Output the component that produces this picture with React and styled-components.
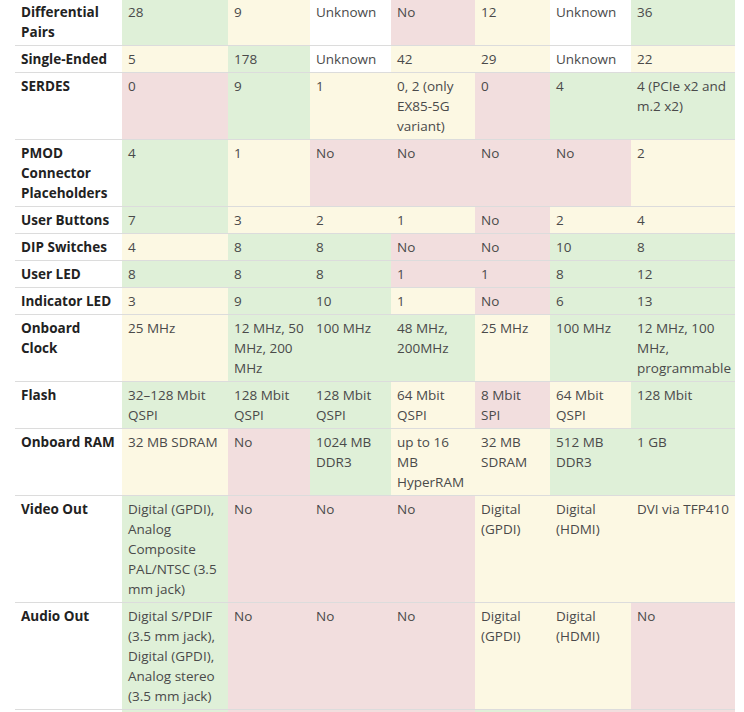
import React from 'react';
import styled, { createGlobalStyle } from 'styled-components';

const GlobalStyle = createGlobalStyle`
  html, body {
    margin: 0;
    padding: 0;
    background: #fff;
  }
  body {
    font-family: "Open Sans", "Noto Sans", "Liberation Sans", sans-serif;
    overflow: hidden;
  }
`

const shades = {
  g: '#dff0d8',
  y: '#fcf8e3',
  r: '#f2dede',
  w: '#ffffff',
}

const Wrapper = styled.div`
  padding-left: 15px;
  margin-top: -2px;
`

const Table = styled.table`
  border-collapse: collapse;
  table-layout: fixed;
  width: 720px;
  font-size: 13.5px;
  line-height: 20px;
`

const Col = styled.col`
  width: ${p => p.$w}px;
`

const Row = styled.tr`
  border-top: 1px solid #dcdcdc;
`

const Head = styled.th`
  text-align: left;
  vertical-align: top;
  padding: 3px 6px;
  font-weight: 700;
  color: #222;
  background: #fff;
`

const Cell = styled.td`
  vertical-align: top;
  padding: 3px 6px;
  color: #4a4a4a;
  white-space: pre-line;
  background: ${p => shades[p.$c]};
`

const widths = [107, 106, 82, 81, 84, 75, 81, 104]

const rows = [
  ['Differential Pairs', [['28', 'g'], ['9', 'y'], ['Unknown', 'w'], ['No', 'r'], ['12', 'y'], ['Unknown', 'w'], ['36', 'g']]],
  ['Single-Ended', [['5', 'y'], ['178', 'g'], ['Unknown', 'w'], ['42', 'y'], ['29', 'y'], ['Unknown', 'w'], ['22', 'y']]],
  ['SERDES', [['0', 'r'], ['9', 'g'], ['1', 'y'], ['0, 2 (only EX85-5G variant)', 'y'], ['0', 'r'], ['4', 'g'], ['4 (PCIe x2 and m.2 x2)', 'g']]],
  ['PMOD Connector Placeholders', [['4', 'g'], ['1', 'y'], ['No', 'r'], ['No', 'r'], ['No', 'r'], ['No', 'r'], ['2', 'y']]],
  ['User Buttons', [['7', 'g'], ['3', 'y'], ['2', 'y'], ['1', 'y'], ['No', 'r'], ['2', 'y'], ['4', 'y']]],
  ['DIP Switches', [['4', 'y'], ['8', 'g'], ['8', 'g'], ['No', 'r'], ['No', 'r'], ['10', 'g'], ['8', 'g']]],
  ['User LED', [['8', 'g'], ['8', 'g'], ['8', 'g'], ['1', 'r'], ['1', 'r'], ['8', 'g'], ['12', 'g']]],
  ['Indicator LED', [['3', 'y'], ['9', 'g'], ['10', 'g'], ['1', 'y'], ['No', 'r'], ['6', 'g'], ['13', 'g']]],
  ['Onboard Clock', [['25 MHz', 'y'], ['12 MHz, 50 MHz, 200 MHz', 'g'], ['100 MHz', 'g'], ['48 MHz, 200MHz', 'g'], ['25 MHz', 'y'], ['100 MHz', 'g'], ['12 MHz, 100 MHz, programmable', 'g']]],
  ['Flash', [['32–128 Mbit QSPI', 'g'], ['128 Mbit QSPI', 'g'], ['128 Mbit QSPI', 'g'], ['64 Mbit QSPI', 'y'], ['8 Mbit\nSPI', 'r'], ['64 Mbit QSPI', 'y'], ['128 Mbit', 'g']]],
  ['Onboard RAM', [['32 MB SDRAM', 'y'], ['No', 'r'], ['1024 MB DDR3', 'g'], ['up to 16 MB HyperRAM', 'y'], ['32 MB SDRAM', 'y'], ['512 MB DDR3', 'g'], ['1 GB', 'g']]],
  ['Video Out', [['Digital (GPDI), Analog Composite PAL/NTSC (3.5 mm jack)', 'g'], ['No', 'r'], ['No', 'r'], ['No', 'r'], ['Digital (GPDI)', 'y'], ['Digital (HDMI)', 'y'], ['DVI via TFP410', 'y']]],
  ['Audio Out', [['Digital S/PDIF (3.5 mm jack), Digital (GPDI), Analog stereo (3.5 mm jack)', 'g'], ['No', 'r'], ['No', 'r'], ['No', 'r'], ['Digital (GPDI)', 'y'], ['Digital (HDMI)', 'y'], ['No', 'r']]],
  // only the top edge of this row shows in the view
  ['', [['', 'g'], ['', 'r'], ['', 'r'], ['', 'r'], ['', 'g'], ['', 'r'], ['', 'r']]],
]

const App = () => {
  return <>
    <GlobalStyle />
    <Wrapper>
      <Table>
        <colgroup>
          {widths.map((w, i) => <Col key={i} $w={w} />)}
        </colgroup>
        <tbody>
          {rows.map(([name, cells], r) => (
            <Row key={r}>
              <Head>{name || '\u00a0'}</Head>
              {cells.map(([text, c], i) => <Cell key={i} $c={c}>{text || '\u00a0'}</Cell>)}
            </Row>
          ))}
        </tbody>
      </Table>
    </Wrapper>
  </>
}

export default App
